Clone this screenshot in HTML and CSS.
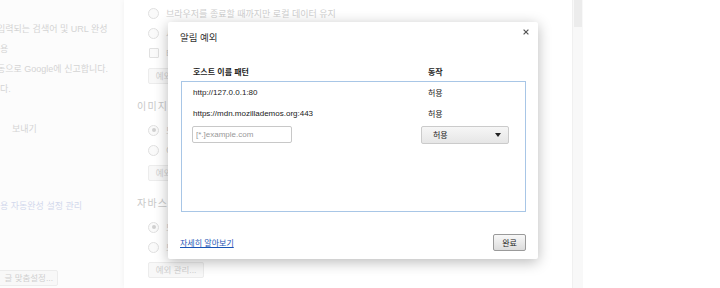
FILE: index.html
```html
<!DOCTYPE html>
<html lang="ko">
<head>
    <meta charset="UTF-8">
    <title>알림 예외</title>
    <link rel="stylesheet" href="styles.css">
</head>
<body>
    <div class="screen">
        <aside class="nav">
            <p class="nav-text clip">입력되는 검색어 및 URL 완성</p>
            <p class="nav-text">용</p>
            <p class="nav-text clip">동으로 Google에 신고합니다.</p>
            <p class="nav-text">다.</p>
            <p class="nav-text send">보내기</p>
            <p class="nav-link">용 자동완성 설정 관리</p>
            <span class="fade-btn nav-btn">글 맞춤설정...</span>
        </aside>

        <main class="page">
            <div class="content">
                <div class="opt"><span class="radio"></span>브라우저를 종료할 때까지만 로컬 데이터 유지</div>
                <div class="opt"><span class="radio"></span>사이트에서 데이터 설정 차단</div>
                <div class="opt"><span class="check"></span>타사 쿠키 및 사이트 데이터 차단</div>
                <span class="fade-btn">예외 관리...</span>

                <h3 class="section">이미지</h3>
                <div class="opt"><span class="radio on"></span>모든 이미지 표시(권장)</div>
                <div class="opt"><span class="radio"></span>이미지 표시 안함</div>
                <span class="fade-btn">예외 관리...</span>

                <h3 class="section">자바스크립트</h3>
                <div class="opt"><span class="radio on"></span>모든 사이트에서 자바스크립트 실행 허용(권장)</div>
                <div class="opt"><span class="radio"></span>모든 사이트에서 자바스크립트 실행 허용 안함</div>
                <span class="fade-btn">예외 관리...</span>
            </div>
            <div class="scrollbar"><div class="thumb"></div></div>
        </main>
        <div class="rest"></div>
    </div>

    <div class="dialog">
        <div class="dlg-head">
            <h2 class="dlg-title">알림 예외</h2>
            <svg class="close" width="6" height="6" viewBox="0 0 6 6">
                <path d="M0.6 0.6L5.4 5.4M5.4 0.6L0.6 5.4" stroke="#555" stroke-width="1.2"/>
            </svg>
        </div>

        <div class="cols">
            <span>호스트 이름 패턴</span>
            <span>동작</span>
        </div>

        <div class="list">
            <div class="row">
                <span>http://127.0.0.1:80</span>
                <span>허용</span>
            </div>
            <div class="row">
                <span>https://mdn.mozillademos.org:443</span>
                <span>허용</span>
            </div>
            <div class="row">
                <input class="pattern" type="text" placeholder="[*.]example.com">
                <div class="select">허용<span class="arrow"></span></div>
            </div>
        </div>

        <div class="dlg-foot">
            <a class="learn" href="#">자세히 알아보기</a>
            <button class="done" type="button">완료</button>
        </div>
    </div>
</body>
</html>
```

FILE: styles.css
```css
body {
    margin: 0;
    font-family: "Liberation Sans", "Noto Sans CJK KR", sans-serif;
    background-color: #fcfcfc;
    overflow: hidden;
}

p, h2, h3 {
    margin: 0;
    font-weight: normal;
}

.screen {
    display: flex;
    height: 288px;
}

/* faded settings page behind the dialog */
.nav {
    width: 124px;
    padding-top: 19px;
    font-size: 9px;
    color: #d4d4d4;
    overflow: hidden;
}

.nav-text {
    line-height: 20px;
    white-space: nowrap;
}

.clip {
    margin-left: -3px;
}

.send {
    margin-top: 20px;
    padding-left: 12px;
}

.nav-link {
    margin-top: 57px;
    line-height: 20px;
    color: #d2d8ec;
    white-space: nowrap;
}

.page {
    display: flex;
    background: #ffffff;
    box-shadow: 0 0 6px rgba(0, 0, 0, 0.05);
}

.content {
    width: 448px;
    padding-top: 3px;
    font-size: 9px;
    color: #cfcfcf;
}

.opt {
    display: flex;
    align-items: center;
    height: 20px;
    padding-left: 24px;
    white-space: nowrap;
}

.radio {
    width: 9px;
    height: 9px;
    margin-right: 7px;
    border: 1px solid #e0e0e0;
    border-radius: 50%;
    background: #fafafa;
    display: flex;
    align-items: center;
    justify-content: center;
}

.radio.on::after {
    content: "";
    width: 4px;
    height: 4px;
    border-radius: 50%;
    background: #d0d0d0;
}

.check {
    width: 8px;
    height: 8px;
    margin-left: 1px;
    margin-right: 7px;
    border: 1px solid #e0e0e0;
    border-radius: 1px;
    background: #fafafa;
}

.fade-btn {
    display: block;
    box-sizing: border-box;
    width: 56px;
    height: 16px;
    margin-top: 5px;
    margin-left: 24px;
    border: 1px solid #ececec;
    border-radius: 2px;
    background: #f8f8f8;
    font-size: 8.5px;
    line-height: 14px;
    text-align: center;
    color: #d0d0d0;
    white-space: nowrap;
}

.nav .nav-btn {
    width: 60px;
    margin-top: 54px;
    margin-left: -2px;
    text-align: right;
    padding-right: 4px;
}

.section {
    margin-top: 13px;
    margin-bottom: 3px;
    padding-left: 13px;
    font-size: 10px;
    line-height: 20px;
    letter-spacing: 1.2px;
    color: #c8c8c8;
}

.scrollbar {
    width: 10px;
    background: #f8f8f8;
    border-left: 1px solid #f0f0f0;
}

.thumb {
    height: 27px;
    margin: 0 1px;
    background: #ececec;
}

.rest {
    flex: 1;
    background: #ffffff;
}

/* dialog */
.dialog {
    position: absolute;
    left: 168px;
    top: 22px;
    width: 370px;
    height: 237px;
    box-sizing: border-box;
    padding: 0 12px 0 13px;
    background: #ffffff;
    border-radius: 2px;
    box-shadow: 0 3px 14px rgba(0, 0, 0, 0.28);
    font-size: 8px;
    color: #222;
}

.dlg-head {
    display: flex;
    justify-content: space-between;
    height: 32px;
}

.dlg-title {
    margin-left: -1px;
    padding-top: 10px;
    font-size: 9.5px;
    line-height: 12px;
    color: #333;
}

.close {
    margin-top: 7px;
    margin-right: -3px;
}

.cols {
    display: grid;
    grid-template-columns: 235px 1fr;
    height: 27px;
    box-sizing: border-box;
    padding: 13px 0 0 12px;
    line-height: 12px;
    font-weight: bold;
}

.list {
    height: 131px;
    box-sizing: border-box;
    padding-left: 11px;
    border: 1px solid #a8c6e6;
}

.row {
    display: grid;
    grid-template-columns: 235px 1fr;
    align-items: center;
    height: 21px;
}

.pattern {
    box-sizing: border-box;
    width: 100px;
    height: 17px;
    margin-left: -1px;
    padding: 0 3px;
    border: 1px solid #c8c8c8;
    border-radius: 2px;
    font-family: inherit;
    font-size: 8px;
    outline: none;
}

.pattern::placeholder {
    color: #999;
}

.select {
    display: flex;
    align-items: center;
    justify-content: space-between;
    box-sizing: border-box;
    width: 88px;
    height: 18px;
    margin-left: -7px;
    padding: 0 7px 0 11px;
    border: 1px solid #cbcbcb;
    border-radius: 2px;
    background: linear-gradient(#f6f6f6, #e6e6e6);
}

.arrow {
    width: 0;
    height: 0;
    border-left: 3.5px solid transparent;
    border-right: 3.5px solid transparent;
    border-top: 4px solid #222;
}

.dlg-foot {
    display: flex;
    justify-content: space-between;
    align-items: center;
    margin-top: 22px;
    margin-left: -1px;
}

.learn {
    color: #1a55b5;
    font-size: 8px;
}

.done {
    box-sizing: border-box;
    width: 33px;
    height: 17px;
    padding: 0;
    border: 1px solid #9a9a9a;
    border-radius: 2px;
    background: linear-gradient(#f8f8f8, #dcdcdc);
    font-family: inherit;
    font-size: 8px;
    color: #222;
}
```
